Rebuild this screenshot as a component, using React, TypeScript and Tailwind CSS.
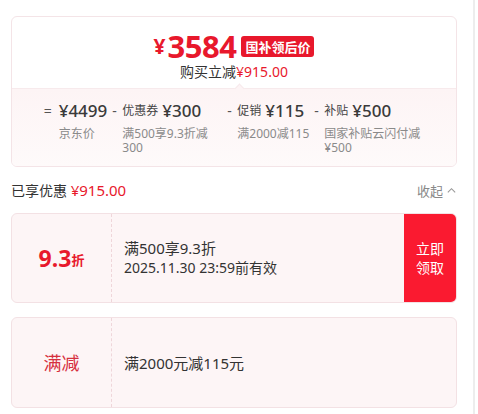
export default function App() {
  const parts = [
    { sign: "=", label: "", value: "¥4499", note: "京东价" },
    { sign: "-", label: "优惠券", value: "¥300", note: "满500享9.3折减300" },
    { sign: "-", label: "促销", value: "¥115", note: "满2000减115" },
    { sign: "-", label: "补贴", value: "¥500", note: "国家补贴云闪付减¥500" },
  ];

  return (
    <div className="flex h-[414px] w-[478px] overflow-hidden bg-white font-['Noto_Sans','Noto_Sans_CJK_SC',sans-serif] text-[#333]">
      <div className="w-[473px] shrink-0 pl-[11px] pt-[16px]">
        <div className="w-[446px]">
          {/* Price summary */}
          <div className="overflow-hidden rounded-[6px] border border-[#f4e4e7]">
            <div className="flex h-[71px] flex-col items-center pt-[13px]">
              <div className="flex h-[32px] items-center">
                <span className="text-[21px] font-bold leading-[32px] text-[#e8182c]">¥</span>
                <span className="ml-[2px] text-[31px] font-bold leading-[32px] tracking-[-0.5px] text-[#e8182c]">3584</span>
                <span className="ml-[5px] flex h-[21px] items-center rounded-[3px] bg-[#e8182c] px-[4px] font-['Noto_Sans_CJK_SC'] text-[13px] font-bold leading-none text-white">
                  国补领后价
                </span>
              </div>
              <div className="mt-[1px] text-[14px] leading-[18px]">
                购买立减<span className="text-[#e8182c]">¥915.00</span>
              </div>
            </div>
            <div className="relative border-t border-[#f7eaec] bg-gradient-to-b from-[#fdf4f5] to-[#fefafa] pb-[11px] pt-[11px]">
              <div className="absolute -top-[4px] left-[224px] h-[7px] w-[7px] rotate-45 border-l border-t border-[#f7eaec] bg-[#fdf4f5]" />
              <div className="flex justify-center gap-[5px]">
                {parts.map((p) => (
                  <div key={p.value} className="flex">
                    <span
                      className={
                        p.sign === "="
                          ? "w-[15px] text-[14px] leading-[22px] text-[#555]"
                          : "w-[10px] text-[14px] leading-[22px] text-[#555]"
                      }
                    >
                      {p.sign}
                    </span>
                    <div className="flex flex-col">
                      <div className="flex items-center gap-[4px] leading-[22px]">
                        {p.label && <span className="text-[12px] text-[#444]">{p.label}</span>}
                        <span className="text-[17px] font-medium text-[#3a3a3a]">{p.value}</span>
                      </div>
                      <div className="mt-[5px] max-w-[100px] text-[12px] leading-[14px] text-[#8a8a8a]">
                        {p.note}
                      </div>
                    </div>
                  </div>
                ))}
              </div>
            </div>
          </div>

          {/* Discount header */}
          <div className="mt-[12px] flex items-center justify-between leading-[22px]">
            <div className="text-[14px]">
              已享优惠 <span className="text-[15px] text-[#e8182c]">¥915.00</span>
            </div>
            <div className="flex items-center gap-[3px] text-[13px] text-[#888]">
              收起
              <svg width="11" height="11" viewBox="0 0 12 12" fill="none" stroke="#999" strokeWidth="1.2">
                <path d="M2 8l4-4 4 4" />
              </svg>
            </div>
          </div>

          {/* Coupon 1 */}
          <div className="mt-[11px] flex h-[90px] overflow-hidden rounded-[6px] border border-[#f3e1e4] bg-[#fdf5f6]">
            <div className="flex w-[100px] items-center justify-center border-r border-dashed border-[#efd6da]">
              <span className="text-[23px] font-bold leading-none text-[#e8182c]">9.3</span>
              <span className="mt-[4px] text-[13px] font-bold leading-none text-[#e8182c]">折</span>
            </div>
            <div className="flex flex-1 flex-col justify-center pl-[12px]">
              <div className="text-[15px] leading-[20px]">满500享9.3折</div>
              <div className="text-[14px] leading-[20px]">2025.11.30 23:59前有效</div>
            </div>
            <div className="flex w-[52px] flex-col items-center justify-center bg-[#fa1a30] text-[14px] leading-[19px] text-white">
              <span>立即</span>
              <span>领取</span>
            </div>
          </div>

          {/* Coupon 2 */}
          <div className="mt-[14px] flex h-[91px] overflow-hidden rounded-[6px] border border-[#f3e1e4] bg-[#fdf5f6]">
            <div className="flex w-[100px] items-center justify-center border-r border-dashed border-[#efd6da]">
              <span className="text-[18px] leading-none text-[#d6303e]">满减</span>
            </div>
            <div className="flex flex-1 items-center pl-[12px] text-[15px] leading-[20px]">
              满2000元减115元
            </div>
          </div>
        </div>
      </div>
      <div className="w-[2px] shrink-0 bg-[#ededed]" />
    </div>
  );
}
